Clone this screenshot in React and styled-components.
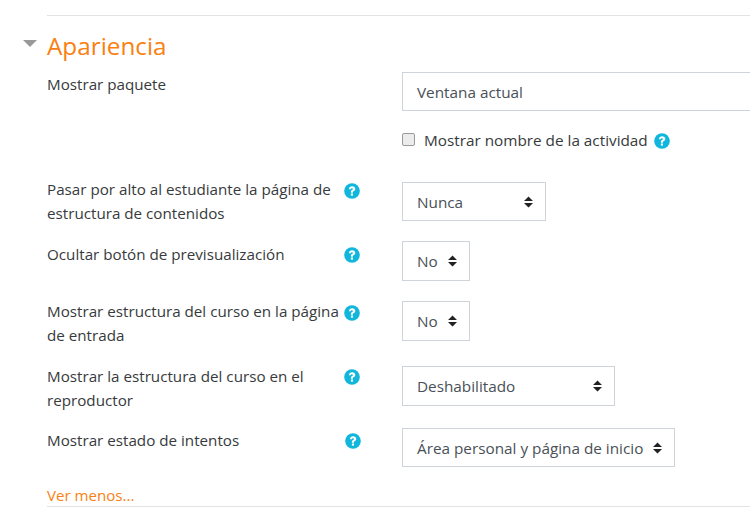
import styled, { createGlobalStyle } from 'styled-components';

const rows = [
  { label: 'Pasar por alto al estudiante la página de estructura de contenidos', value: 'Nunca', width: 144, height: 39, gap: 16, labelTop: -4, iconTop: 1 },
  { label: 'Ocultar botón de previsualización', value: 'No', width: 68, height: 40, gap: 20, labelTop: 2, iconTop: 6 },
  { label: 'Mostrar estructura del curso en la página de entrada', value: 'No', width: 68, height: 40, gap: 19, labelTop: -1, iconTop: 4 },
  { label: 'Mostrar la estructura del curso en el reproductor', value: 'Deshabilitado', width: 213, height: 40, gap: 16, labelTop: -1, iconTop: 3 },
  { label: 'Mostrar estado de intentos', value: 'Área personal y página de inicio', width: 273, height: 39, gap: 0, labelTop: 1, iconTop: 5, iconShift: 1 }
];

const GlobalStyle = createGlobalStyle`
  html, body {
    margin: 0;
    height: 100%;
    overflow: hidden;
    background: #fff;
  }
  body {
    font-family: "Open Sans", "Liberation Sans", sans-serif;
    font-size: 15.3px;
    color: #373a3c;
  }
`;

const Page = styled.div`
  width: 750px;
  height: 523px;
  padding: 15px 0 0 47px;
  box-sizing: border-box;
  overflow: hidden;
`;
const Rule = styled.div`
  height: 1px;
  background: #e3e3e3;
`;
const Legend = styled.div`
  position: relative;
  height: 31px;
  margin: 14px 0 11px;
  color: #f98012;
  font-size: 24.3px;
  line-height: 31px;
`;
const Caret = styled.span`
  position: absolute;
  left: -24px;
  top: 10px;
  border-left: 7px solid transparent;
  border-right: 7px solid transparent;
  border-top: 7px solid #999;
`;
const Row = styled.div`
  display: grid;
  grid-template-columns: 295px 60px 348px;
  margin-bottom: ${(p) => p.$gap}px;
`;
const Label = styled.div`
  font-size: 15.2px;
  line-height: 23.5px;
  margin-top: ${(p) => p.$top}px;
`;
const HelpCell = styled.div`
  padding: ${(p) => p.$top}px 0 0 ${(p) => 2 + (p.$shift || 0)}px;
`;
const Help = styled.svg`
  display: block;
  width: 16px;
  height: 16px;
`;
const InlineHelp = styled(Help)`
  margin-left: 6px;
  margin-top: 2px;
`;
const Control = styled.div`
  box-sizing: border-box;
  display: flex;
  align-items: center;
  justify-content: space-between;
  width: ${(p) => p.$width}px;
  height: ${(p) => p.$height}px;
  padding: 0 12px 0 14px;
  border: 1px solid #ced4da;
  background: #fff;
  color: #495057;
  white-space: nowrap;
`;
const Arrows = styled.svg`
  flex: none;
  width: 9px;
  height: 12px;
`;
const CheckLine = styled.div`
  display: flex;
  align-items: center;
  height: 23px;
  margin: 17px 0 31px;
  white-space: nowrap;
`;
const Box = styled.span`
  box-sizing: border-box;
  width: 13px;
  height: 13px;
  margin-right: 9px;
  border: 1px solid #9a9a9a;
  border-radius: 2px;
  background: #ececec;
`;
const More = styled.a`
  display: block;
  margin-top: 17px;
  font-size: 15.1px;
  color: #f98012;
  line-height: 23px;
`;
const BottomRule = styled(Rule)`
  margin-top: -1px;
`;

function HelpIcon({ as: Icon = Help }) {
  return (
    <Icon viewBox="0 0 16 16">
      <circle cx="8" cy="8" r="7.8" fill="#10b6dc" />
      <path d="M4.900 6.100C5 4.300 6.300 3.200 8.100 3.200s3.200 1.100 3.200 2.600c0 1.100-.6 1.800-1.500 2.300-.6.4-.8.6-.8 1.200v.4H6.900v-.6c0-1 .3-1.500 1.100-2 .6-.4.900-.7.900-1.200S8.600 5.200 8 5.200c-.6 0-1.100.4-1.100 1H4.900z" fill="#fff" />
      <rect x="6.900" y="10.500" width="2.100" height="2.100" fill="#fff" />
    </Icon>
  );
}

function UpDown() {
  return (
    <Arrows viewBox="0 0 9 12">
      <path d="M4.500 0.500 9 5H0zM0 7h9l-4.500 4.500z" fill="#222" />
    </Arrows>
  );
}

export default function App() {
  return (
    <Page>
      <GlobalStyle />
      <Rule />
      <Legend>
        <Caret />
        Apariencia
      </Legend>
      <Row $gap={0}>
        <Label $top={1}>Mostrar paquete</Label>
        <div />
        <div>
          <Control $width={360} $height={39}>Ventana actual</Control>
        </div>
      </Row>
      <Row $gap={0}>
        <div />
        <div />
        <CheckLine>
          <Box />
          Mostrar nombre de la actividad
          <HelpIcon as={InlineHelp} />
        </CheckLine>
      </Row>
      {rows.map((row) => (
        <Row key={row.label} $gap={row.gap}>
          <Label $top={row.labelTop}>{row.label}</Label>
          <HelpCell $top={row.iconTop} $shift={row.iconShift}>
            <HelpIcon />
          </HelpCell>
          <div>
            <Control $width={row.width} $height={row.height}>
              {row.value}
              <UpDown />
            </Control>
          </div>
        </Row>
      ))}
      <More>Ver menos...</More>
      <BottomRule />
    </Page>
  );
}
